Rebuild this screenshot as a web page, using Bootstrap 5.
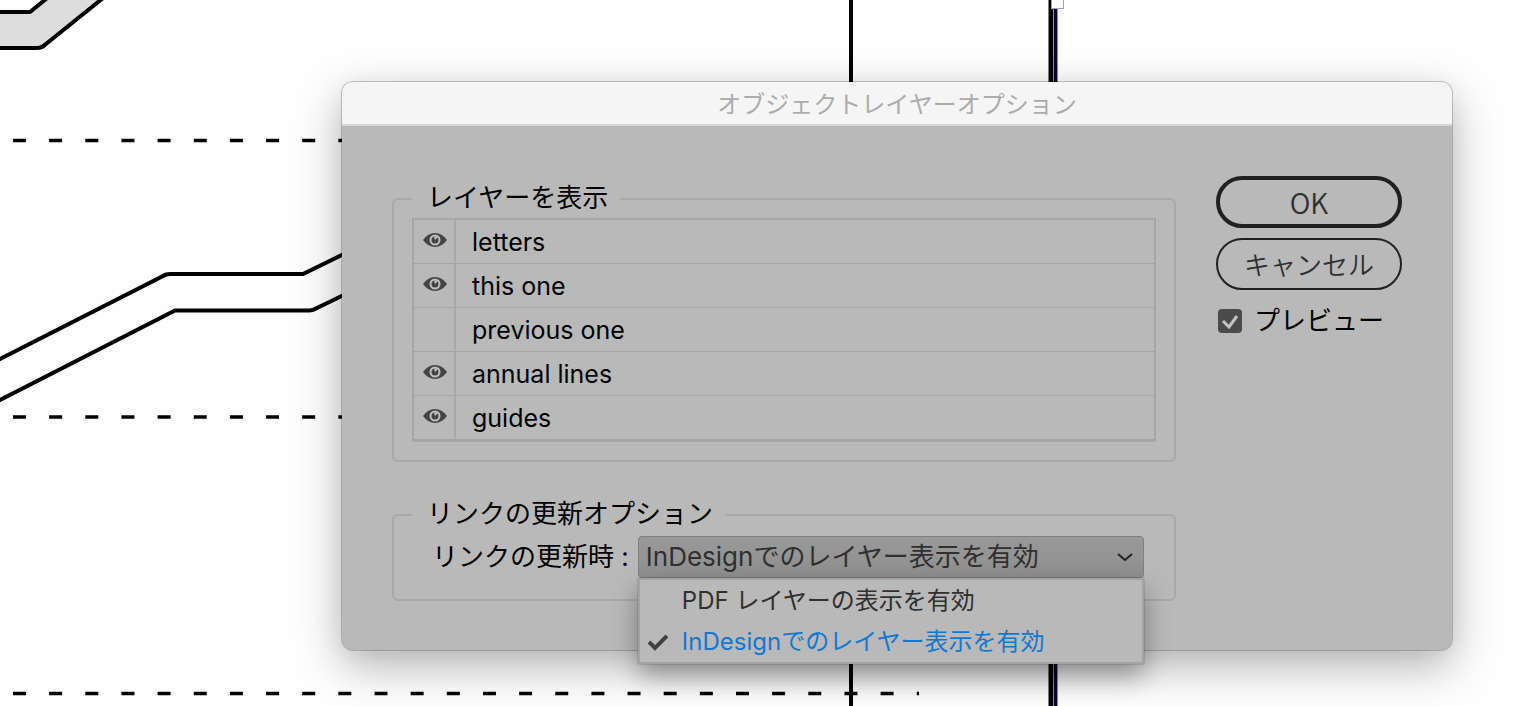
<!DOCTYPE html>
<html lang="ja">
<head>
<meta charset="utf-8">
<meta name="viewport" content="width=device-width, initial-scale=1">
<title>オブジェクトレイヤーオプション</title>
<link href="https://cdn.jsdelivr.net/npm/bootstrap@5.3.0/dist/css/bootstrap.min.css" rel="stylesheet">
<style>
  body { font-family: Inter, "Noto Sans CJK JP", sans-serif; font-size: 26px; line-height: 38px; color: #000; background: #fefefe; }
  .desktop { min-height: 100vh; padding: 82px 64px 55px 342px; }
  .artboard { inset: 0; z-index: 0; }
  .dialog-window { z-index: 1; border-radius: 11px; background: #b9b9b9; box-shadow: 0 0 0 1px rgba(0, 0, 0, .2), 0 16px 46px rgba(0, 0, 0, .3), 0 0 24px rgba(0, 0, 0, .04); }
  .title-bar { height: 44px; padding-top: 2px; font-size: 24px; line-height: 42px; color: #acacac; background: #f5f5f5; border-bottom: 2px solid #d6d6d6; border-radius: 11px 11px 0 0; font-weight: 400; }
  .dialog-content { padding: 50px 50px 49px; gap: 40px; }
  .group-box { border: 2px solid #a9a9a9; border-radius: 6px; padding: 0 18px 18px; margin-top: 4px; }
  .group-box legend { float: none; width: auto; margin: 0; padding: 0 12px 2px 15px; font-size: 26px; line-height: 36px; }
  .link-group { margin-top: 34px; padding-bottom: 21px; }
  .layer-table { border: 2px solid #a6a6a6; border-collapse: separate; border-spacing: 0; font-size: 25px; }
  .layer-table td { height: 44px; padding: 0; line-height: 40px; border-bottom: 1px solid #a6a6a6; }
  .layer-table .eye-cell { width: 42px; line-height: 0; border-right: 2px solid #a8a8a8; padding: 0 0 4px 2px; text-align: center; vertical-align: middle; }
  .layer-table .name-cell { padding: 1px 0 0 16px; }
  .side-buttons { width: 186px; gap: 10px; }
  .pill { height: 52px; padding: 0; border: 2px solid #202020; border-radius: 26px; color: #303030; font-size: 26px; line-height: 42px; font-family: "Noto Sans CJK JP", sans-serif; font-weight: 350; }
  .pill-default { border-width: 4px; font-size: 28px; line-height: 38px; }
  .preview { padding: 2px 2px 0; gap: 12px; }
  .preview .form-check-input { width: 24px; height: 24px; margin: 0; border: 0; border-radius: 4px; background-color: #4b4b4b; background-size: 24px; }
  .preview .form-check-input:checked { background-image: url("data:image/svg+xml,%3Csvg xmlns='http://www.w3.org/2000/svg' viewBox='0 0 24 24'%3E%3Cpath d='M5 12l6 6L19 7' fill='none' stroke='%23c4c4c4' stroke-width='3'/%3E%3C/svg%3E"); }
  .link-row { padding: 2px 12px 0 20px; gap: 9px; }
  .mode-select { height: 42px; padding: 0 36px 0 7px; border: 1px solid #808080; border-radius: 4px; color: #303030; font-size: 26px; line-height: 40px; background-color: #959595;
    background-image: url("data:image/svg+xml,%3Csvg xmlns='http://www.w3.org/2000/svg' viewBox='0 0 16 16'%3E%3Cpath d='M1 5l7 6 7-6' fill='none' stroke='%23222' stroke-width='2'/%3E%3C/svg%3E"), linear-gradient(#999, #8f8f8f);
    background-repeat: no-repeat; background-position: right 10px center, 0 0; background-size: 16px, 100%; }
  .mode-menu { top: 100%; left: 0; right: 0; padding: 0; border: 2px solid #a3a3a3; border-radius: 2px; background: #b9b9b9; box-shadow: 0 0 0 1px rgba(0, 0, 0, .1), 0 12px 26px rgba(0, 0, 0, .34); }
  .mode-menu .dropdown-item { height: 41px; padding: 0 8px; gap: 14px; font-size: 24px; line-height: 42px; color: #303030; }
  .mode-menu .dropdown-item.chosen { color: #1278d2; }
  .tick { width: 20px; height: 18px; }
</style>
</head>
<body>
<div class="desktop position-relative overflow-hidden">
  <svg class="artboard position-absolute" width="100%" height="100%" fill="none" stroke="#000" stroke-width="4" aria-hidden="true">
    <path d="M-4 12H30L62-14H118L46 44Q42 48 37 48H-4Z" fill="#ddd"/>
    <path d="M-6 362L163 276Q166 274 170 274H303L350 251"/>
    <path d="M-6 403L175 310.500H309Q313 310.500 317 308L350 292"/>
    <path d="M13 140.500H350M13 417H350M13 693.500H919" stroke-width="3.500" stroke-dasharray="13 23.150"/>
    <path d="M851-2V720"/>
    <path d="M1051-2V720" stroke-width="5"/>
    <path d="M1055.500-2V720" stroke="#080830" stroke-width="3"/>
    <path d="M1053.500 8V720M1057.500 8V720" stroke="#8d84c8" stroke-width="1"/>
    <rect x="1051.500" y="-4.500" width="12" height="13" fill="#fff" stroke="#a59bdc" stroke-width="1"/>
  </svg>

  <svg class="d-none" aria-hidden="true">
    <symbol id="eye" viewBox="0 0 24 16">
      <path d="M0 8Q5 1 12 1T24 8Q19 15 12 15T0 8Z" fill="#444"/>
      <circle cx="12" cy="8" r="4.500" fill="#444" stroke="#c0c0c0" stroke-width="2"/>
      <path d="M12 8L11 4.500Q13 3.500 14.500 5.500Z" fill="#c0c0c0"/>
    </symbol>
  </svg>

  <div class="dialog-window position-relative" role="dialog" aria-labelledby="dialogTitle">
    <h1 class="title-bar text-center m-0" id="dialogTitle">オブジェクトレイヤーオプション</h1>
    <form class="dialog-content d-flex align-items-start">
      <div class="flex-grow-1">
        <fieldset class="group-box">
          <legend>レイヤーを表示</legend>
          <table class="layer-table w-100">
            <tbody>
              <tr><td class="eye-cell"><svg width="24" height="16" role="img" aria-label="表示"><use href="#eye"/></svg></td><td class="name-cell">letters</td></tr>
              <tr><td class="eye-cell"><svg width="24" height="16" role="img" aria-label="表示"><use href="#eye"/></svg></td><td class="name-cell">this one</td></tr>
              <tr><td class="eye-cell"></td><td class="name-cell">previous one</td></tr>
              <tr><td class="eye-cell"><svg width="24" height="16" role="img" aria-label="表示"><use href="#eye"/></svg></td><td class="name-cell">annual lines</td></tr>
              <tr><td class="eye-cell"><svg width="24" height="16" role="img" aria-label="表示"><use href="#eye"/></svg></td><td class="name-cell">guides</td></tr>
            </tbody>
          </table>
        </fieldset>
        <fieldset class="group-box link-group">
          <legend>リンクの更新オプション</legend>
          <div class="link-row d-flex align-items-center">
            <label class="text-nowrap" for="linkMode">リンクの更新時 :</label>
            <div class="position-relative flex-grow-1">
              <select class="mode-select form-select" id="linkMode">
                <option>PDF レイヤーの表示を有効</option>
                <option selected>InDesignでのレイヤー表示を有効</option>
              </select>
              <ul class="mode-menu dropdown-menu show m-0">
                <li><button type="button" class="dropdown-item d-flex align-items-center"><span class="tick"></span>PDF レイヤーの表示を有効</button></li>
                <li><button type="button" class="dropdown-item chosen d-flex align-items-center"><svg class="tick" viewBox="0 0 20 18" fill="none" stroke="#404040" stroke-width="4" aria-hidden="true"><path d="M1 9l6 6L19 3"/></svg>InDesignでのレイヤー表示を有効</button></li>
              </ul>
            </div>
          </div>
        </fieldset>
      </div>
      <div class="side-buttons d-flex flex-column flex-shrink-0">
        <button type="submit" class="btn pill pill-default">OK</button>
        <button type="button" class="btn pill">キャンセル</button>
        <div class="preview d-flex align-items-center">
          <input class="form-check-input" type="checkbox" id="preview" checked>
          <label class="text-nowrap" for="preview">プレビュー</label>
        </div>
      </div>
    </form>
  </div>
</div>
<script src="https://cdn.jsdelivr.net/npm/bootstrap@5.3.0/dist/js/bootstrap.bundle.min.js"></script>
</body>
</html>
